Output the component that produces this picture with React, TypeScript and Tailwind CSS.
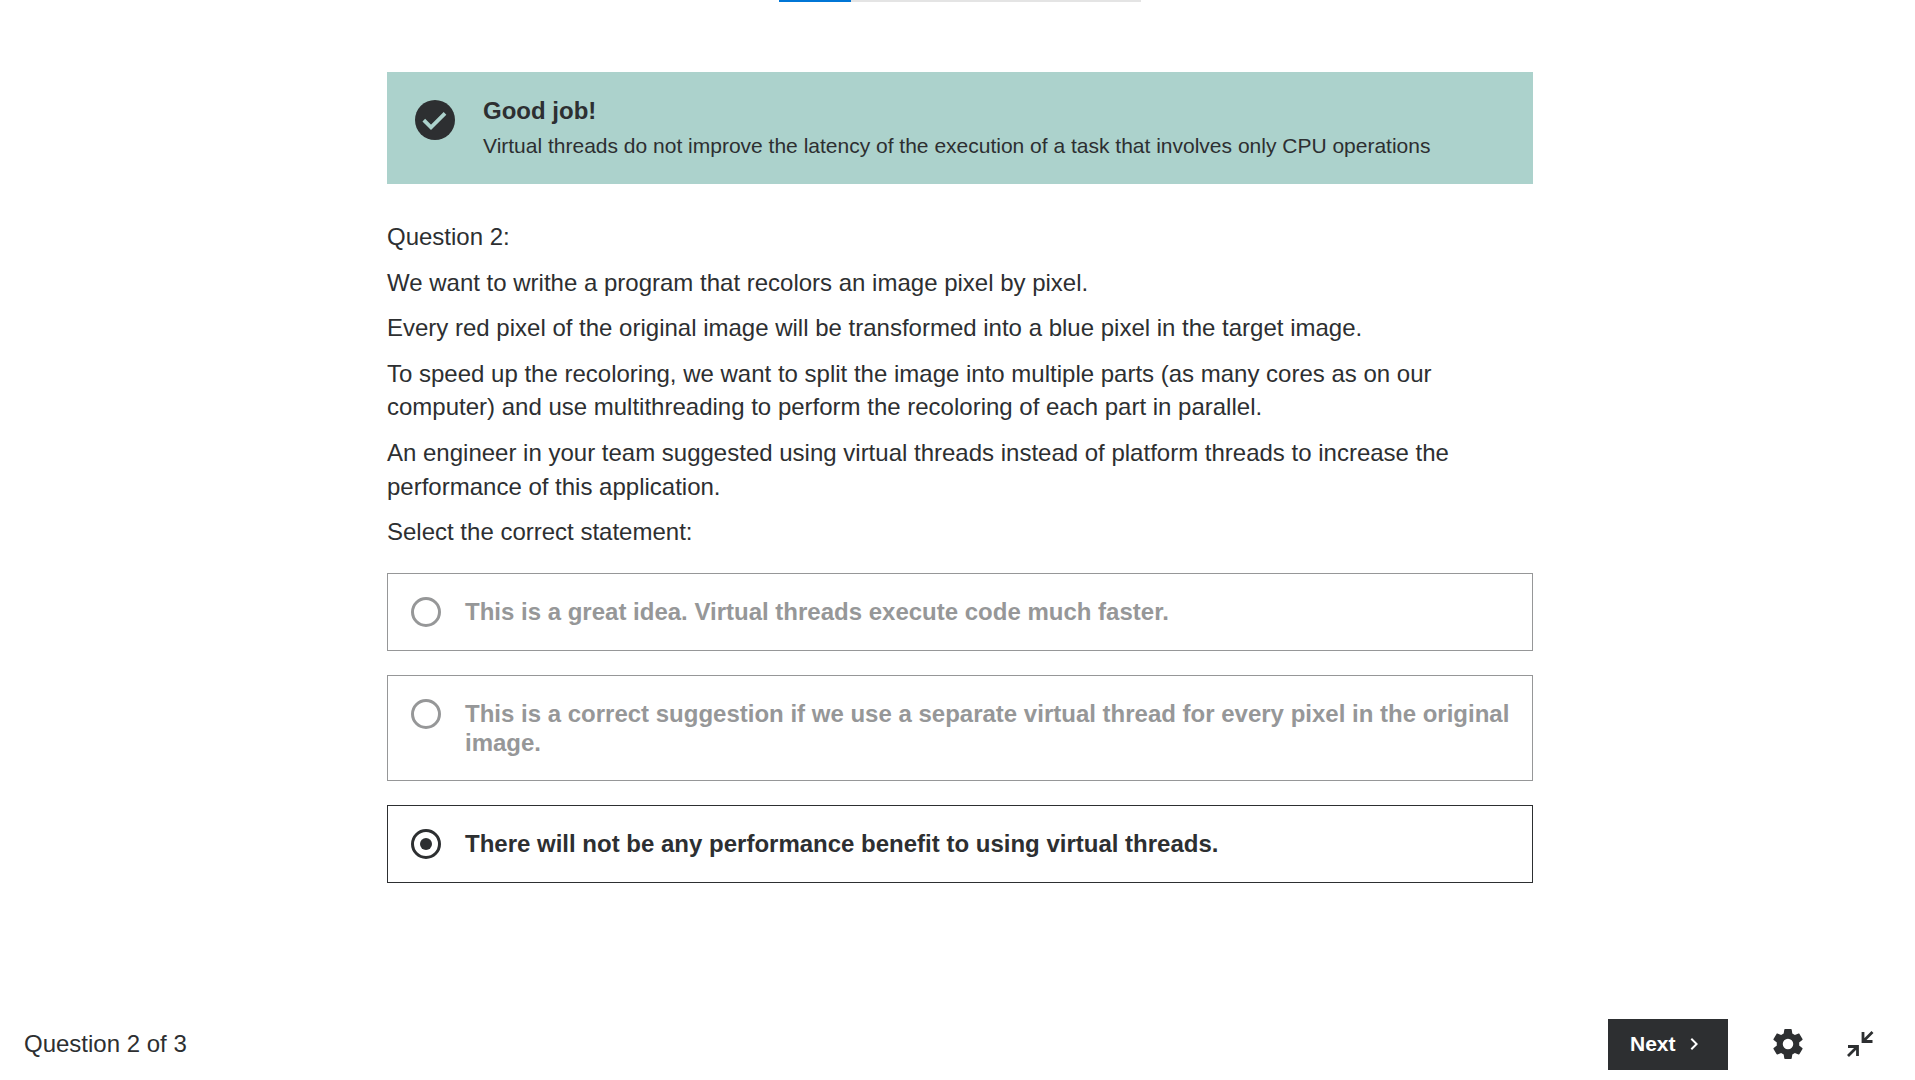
import { useState } from 'react';

const PARAGRAPHS = [
  'Question 2:',
  'We want to writhe a program that recolors an image pixel by pixel.',
  'Every red pixel of the original image will be transformed into a blue pixel in the target image.',
  'To speed up the recoloring, we want to split the image into multiple parts (as many cores as on our computer) and use multithreading to perform the recoloring of each part in parallel.',
  'An engineer in your team suggested using virtual threads instead of platform threads to increase the performance of this application.',
  'Select the correct statement:',
];

const ANSWERS = [
  'This is a great idea. Virtual threads execute code much faster.',
  'This is a correct suggestion if we use a separate virtual thread for every pixel in the original image.',
  'There will not be any performance benefit to using virtual threads.',
];

function SuccessIcon() {
  return (
    <svg viewBox="0 0 40 40" className="size-10 shrink-0" aria-hidden="true">
      <circle cx="20" cy="20" r="20" fill="#2d2f31" />
      <path d="M8.8 20.2 16 27.4 30 13.4" fill="none" stroke="#acd2cc" strokeWidth="3.8" />
    </svg>
  );
}

function ChevronIcon() {
  return (
    <svg viewBox="0 0 24 24" className="size-6" fill="currentColor" aria-hidden="true">
      <path d="M10 6 8.59 7.41 13.17 12l-4.58 4.59L10 18l6-6z" />
    </svg>
  );
}

function GearIcon() {
  return (
    <svg viewBox="0 0 24 24" className="size-9" fill="currentColor" aria-hidden="true">
      <path d="M19.43 12.98c.04-.32.07-.64.07-.98s-.03-.66-.07-.98l2.11-1.65c.19-.15.24-.42.12-.64l-2-3.46c-.12-.22-.39-.3-.61-.22l-2.49 1c-.52-.4-1.08-.73-1.69-.98l-.38-2.65A.49.49 0 0 0 14 2h-4c-.25 0-.46.18-.49.42l-.38 2.65c-.61.25-1.17.59-1.69.98l-2.49-1c-.23-.09-.49 0-.61.22l-2 3.46c-.13.22-.07.49.12.64l2.11 1.65c-.04.32-.07.65-.07.98s.03.66.07.98l-2.11 1.65c-.19.15-.24.42-.12.64l2 3.46c.12.22.39.3.61.22l2.49-1c.52.4 1.08.73 1.69.98l.38 2.65c.03.24.24.42.49.42h4c.25 0 .46-.18.49-.42l.38-2.65c.61-.25 1.17-.59 1.69-.98l2.49 1c.23.09.49 0 .61-.22l2-3.46c.12-.22.07-.49-.12-.64zM12 15.5a3.5 3.5 0 1 1 0-7 3.5 3.5 0 0 1 0 7z" />
    </svg>
  );
}

function CollapseIcon() {
  return (
    <svg viewBox="0 0 36 36" className="size-9" fill="none" stroke="currentColor" strokeWidth="2.8" aria-hidden="true">
      <path d="M21 6v9.5h9.5M21 15.5 30.5 6M6 20.5h9.5V30M15.5 20.5 6 30" />
    </svg>
  );
}

export default function App() {
  const [selected, setSelected] = useState(2);

  return (
    <div className="flex min-h-screen flex-col bg-white pl-[5px] font-['Liberation_Sans',Arial,sans-serif] text-2xl leading-[1.4] text-[#2d2f31]">
      <div
        role="progressbar"
        aria-label="Quiz progress"
        aria-valuenow={20}
        className="mx-auto h-0.5 w-[362px] max-w-full bg-[#e4e4e4]"
      >
        <div className="h-full w-1/5 bg-[#0076d6]" />
      </div>

      <main className="mx-auto flex w-full max-w-[1146px] flex-1 flex-col pt-[70px]">
        <section role="status" className="flex gap-7 bg-[#acd2cc] px-7 pt-6 pb-[23px]">
          <div className="pt-1">
            <SuccessIcon />
          </div>
          <div>
            <h2 className="font-bold leading-[29px]">Good job!</h2>
            <p className="mt-1.5 text-[21px] leading-[30px]">
              Virtual threads do not improve the latency of the execution of a task that involves only CPU operations
            </p>
          </div>
        </section>

        <form className="pt-9">
          <div id="question" className="flex flex-col gap-3">
            {PARAGRAPHS.map((text) => (
              <p key={text}>{text}</p>
            ))}
          </div>

          <div role="radiogroup" aria-labelledby="question" className="mt-6 flex flex-col gap-6">
            {ANSWERS.map((text, index) => (
              <label
                key={text}
                className="flex cursor-pointer items-start gap-6 border border-[#969798] py-[23px] pr-3 pl-[23px] font-bold leading-[29px] text-[#969798] has-checked:border-[#2d2f31] has-checked:text-[#2d2f31]"
              >
                <input
                  type="radio"
                  name="answer"
                  checked={selected === index}
                  onChange={() => setSelected(index)}
                  className="grid size-[30px] shrink-0 appearance-none place-items-center rounded-full border-3 border-current before:size-3 before:rounded-full checked:before:bg-current"
                />
                <span>{text}</span>
              </label>
            ))}
          </div>
        </form>
      </main>

      <footer className="flex items-start justify-between pr-[19px] pb-2.5 pl-[19px]">
        <p className="leading-[49px]">Question 2 of 3</p>
        <div className="flex items-start">
          <button
            type="button"
            className="mr-6 flex h-[51px] w-[120px] items-center gap-1.5 bg-[#2d2f31] pb-0.5 pl-[22px] text-[21px] font-bold text-white"
          >
            Next
            <ChevronIcon />
          </button>
          <button type="button" aria-label="Settings" className="flex h-[50px] w-[72px] items-center justify-center">
            <GearIcon />
          </button>
          <button type="button" aria-label="Exit expanded view" className="flex h-[50px] w-[72px] items-center justify-center">
            <CollapseIcon />
          </button>
        </div>
      </footer>
    </div>
  );
}
